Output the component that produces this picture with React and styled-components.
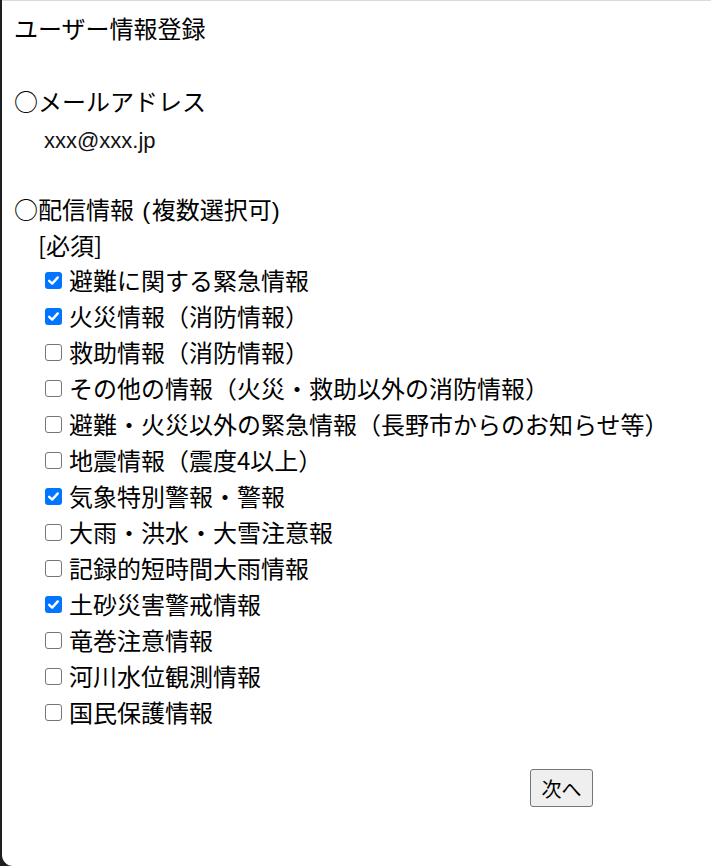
import React from 'react';
import styled, { createGlobalStyle } from 'styled-components';

const GlobalStyle = createGlobalStyle`
  html, body {
    margin: 0;
    padding: 0;
    background: #1f1f1f;
  }
  body {
    font-family: "Noto Sans CJK JP", "Noto Sans", sans-serif;
  }
`;

const Frame = styled.div`
  box-sizing: border-box;
  height: 866px;
  margin-left: 2px;
  background: #fff;
  border-top: 1px solid #dadada;
  border-bottom-left-radius: 11px;
  padding: 9px 0 0 12px;
  color: #000;
  font-size: 24px;
  line-height: 36px;
`;

const Title = styled.div`
  margin: 0;
`;

const Heading = styled.div`
  margin-top: ${props => props.gap || 0}px;
`;

const Latin = styled.span`
  font-family: "Liberation Sans", Arial, sans-serif;
  letter-spacing: 1.5px;
  line-height: 1;
`;

const Email = styled.div`
  margin: 4px 0 0 30px;
  font-family: "Liberation Sans", Arial, sans-serif;
  font-size: 22px;
  color: #111;
`;

const Required = styled.div`
  margin-left: 24px;
`;

const List = styled.div`
  display: flex;
  flex-direction: column;
  margin-top: -1px;
`;

const Row = styled.label`
  display: flex;
  align-items: center;
  height: 36px;
  padding-left: 31px;
`;

const Box = styled.span`
  box-sizing: border-box;
  flex: none;
  display: flex;
  align-items: center;
  justify-content: center;
  width: 17px;
  height: 17px;
  margin: 0 7px 0 0;
  border-radius: 3px;
  border: ${props => (props.checked ? 'none' : '1.5px solid #767676')};
  background: ${props => (props.checked ? '#0075ff' : '#fff')};
`;

const Footer = styled.div`
  display: flex;
  padding-left: 516px;
  margin-top: 39px;
`;

const NextButton = styled.button`
  box-sizing: border-box;
  width: 63px;
  height: 38px;
  padding: 0;
  background: #efefef;
  border: 1px solid #767676;
  border-radius: 3px;
  font-family: "Noto Sans CJK JP", sans-serif;
  font-size: 20px;
  color: #000;
`;

const items = [
  ['避難に関する緊急情報', true],
  ['火災情報（消防情報）', true],
  ['救助情報（消防情報）', false],
  ['その他の情報（火災・救助以外の消防情報）', false],
  ['避難・火災以外の緊急情報（長野市からのお知らせ等）', false],
  ['地震情報（震度4以上）', false],
  ['気象特別警報・警報', true],
  ['大雨・洪水・大雪注意報', false],
  ['記録的短時間大雨情報', false],
  ['土砂災害警戒情報', true],
  ['竜巻注意情報', false],
  ['河川水位観測情報', false],
  ['国民保護情報', false],
];

const Checkbox = ({ checked }) => (
  <Box checked={checked}>
    {checked && (
      <svg width="13" height="13" viewBox="0 0 13 13">
        <path d="M2.2 6.8 L5.2 9.6 L10.8 3.4" fill="none" stroke="#fff" strokeWidth="2.4" strokeLinecap="round" strokeLinejoin="round" />
      </svg>
    )}
  </Box>
);

export default function App() {
  return (
    <>
      <GlobalStyle />
      <Frame>
        <Title>ユーザー情報登録</Title>
        <Heading gap={37}>○メールアドレス</Heading>
        <Email>xxx@xxx.jp</Email>
        <Heading gap={32}>○配信情報<Latin> (</Latin>複数選択可<Latin>)</Latin></Heading>
        <Required>[必須]</Required>
        <List>
          {items.map(([label, checked]) => (
            <Row key={label}>
              <Checkbox checked={checked} />
              {label}
            </Row>
          ))}
        </List>
        <Footer>
          <NextButton type="button">次へ</NextButton>
        </Footer>
      </Frame>
    </>
  );
}
